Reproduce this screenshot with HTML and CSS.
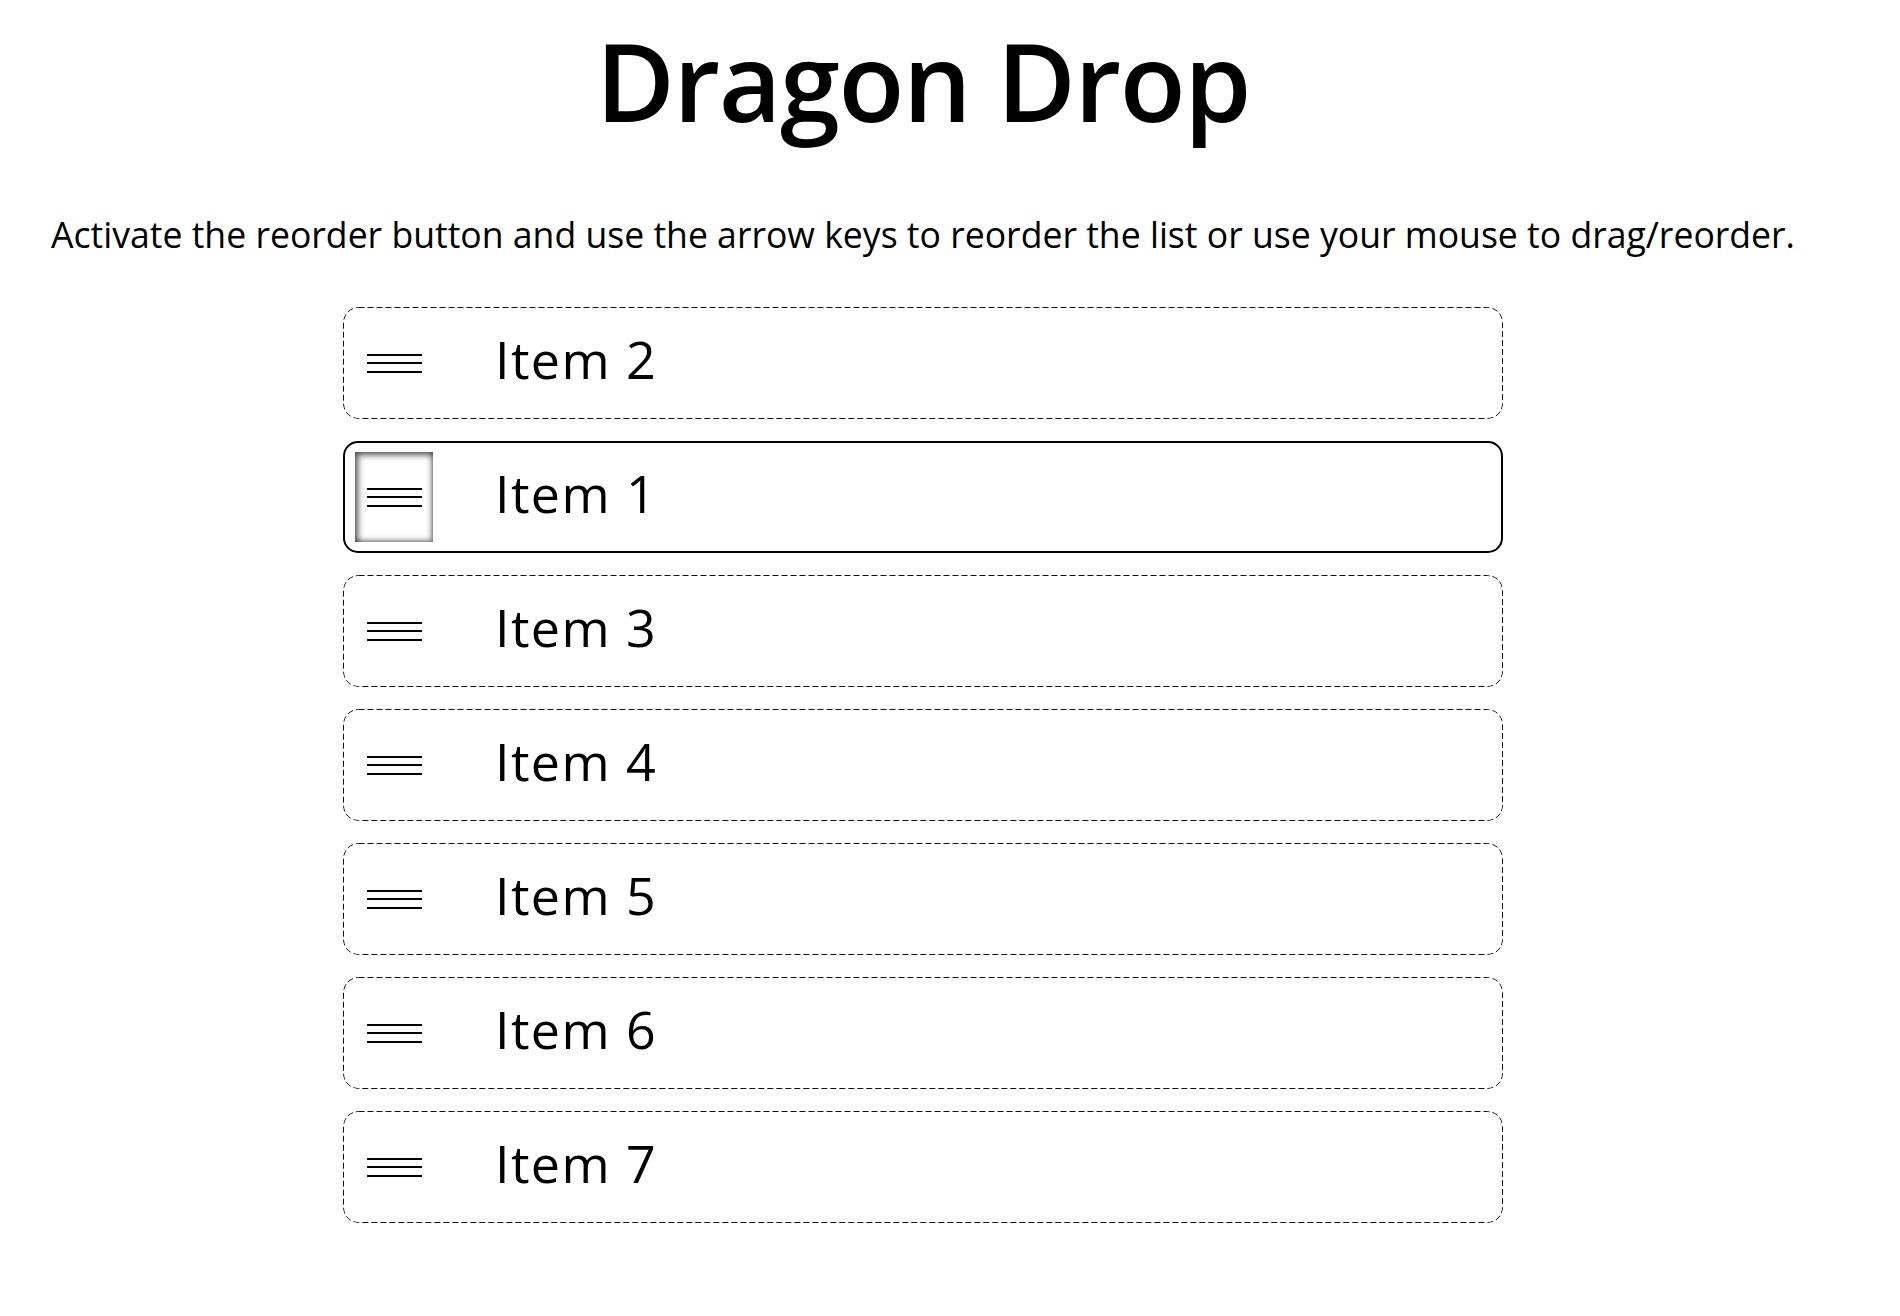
FILE: index.html
```html
<!DOCTYPE html>
<html lang="en">
<head>
<meta charset="utf-8">
<title>Dragon Drop</title>
<link rel="stylesheet" href="styles.css">
</head>
<body>
<div class="page">
  <h1 class="title">Dragon Drop</h1>
  <p class="intro">Activate the reorder button and use the arrow keys to reorder the list or use your mouse to drag/reorder.</p>
  <ul class="list">
    <li class="item"><button class="handle" aria-label="Reorder Item 2"><span class="bars"></span></button><span class="label">Item 2</span></li>
    <li class="item item-active"><button class="handle handle-focus" aria-label="Reorder Item 1"><span class="bars"></span></button><span class="label">Item 1</span></li>
    <li class="item"><button class="handle" aria-label="Reorder Item 3"><span class="bars"></span></button><span class="label">Item 3</span></li>
    <li class="item"><button class="handle" aria-label="Reorder Item 4"><span class="bars"></span></button><span class="label">Item 4</span></li>
    <li class="item"><button class="handle" aria-label="Reorder Item 5"><span class="bars"></span></button><span class="label">Item 5</span></li>
    <li class="item"><button class="handle" aria-label="Reorder Item 6"><span class="bars"></span></button><span class="label">Item 6</span></li>
    <li class="item"><button class="handle" aria-label="Reorder Item 7"><span class="bars"></span></button><span class="label">Item 7</span></li>
  </ul>
</div>
</body>
</html>
```
FILE: styles.css
```css
html, body {
  margin: 0;
  padding: 0;
  background: #fff;
  color: #000;
  font-family: "Open Sans", "DejaVu Sans", sans-serif;
}

.page {
  width: 1846px;
  display: flex;
  flex-direction: column;
  align-items: center;
  padding-top: 16px;
}

.title {
  margin: 0;
  font-size: 108px;
  font-weight: 600;
  letter-spacing: -1.4px;
  line-height: 130px;
  text-align: center;
}

.intro {
  margin: 64px 0 0;
  font-size: 35.6px;
  line-height: 48px;
  text-align: center;
}

.list {
  list-style: none;
  margin: 49px 0 0;
  padding: 0;
  width: 1160px;
  display: flex;
  flex-direction: column;
  gap: 22px;
}

.item {
  box-sizing: border-box;
  height: 112px;
  border-radius: 15px;
  display: flex;
  align-items: center;
  padding-left: 12px;
  background: url("data:image/svg+xml;utf8,<svg xmlns='http://www.w3.org/2000/svg' width='1160' height='112'><rect x='0.5' y='0.5' width='1159' height='111' rx='15' ry='15' fill='none' stroke='%23111' stroke-width='1' stroke-dasharray='6 3'/></svg>") no-repeat 0 0;
}

.item-active {
  background: none;
  border: 2px solid #000;
  padding-left: 10px;
}

.handle {
  box-sizing: border-box;
  width: 78px;
  height: 90px;
  border: 0;
  margin: 0;
  padding: 0;
  background: transparent;
  display: flex;
  align-items: center;
  justify-content: center;
}

.handle-focus {
  background: #fff;
  box-shadow: inset 3px 3px 6px rgba(0, 0, 0, 0.65), inset -2px -2px 5px rgba(0, 0, 0, 0.45);
}

.bars {
  display: block;
  width: 55px;
  height: 19px;
  background: linear-gradient(#000, #000) 0 0 / 100% 2px no-repeat,
              linear-gradient(#000, #000) 0 8px / 100% 2px no-repeat,
              linear-gradient(#000, #000) 0 17px / 100% 2px no-repeat;
}

.label {
  margin-left: 62px;
  padding-bottom: 8px;
  font-size: 52px;
  letter-spacing: 1.4px;
  line-height: 60px;
  color: #000;
}
```
